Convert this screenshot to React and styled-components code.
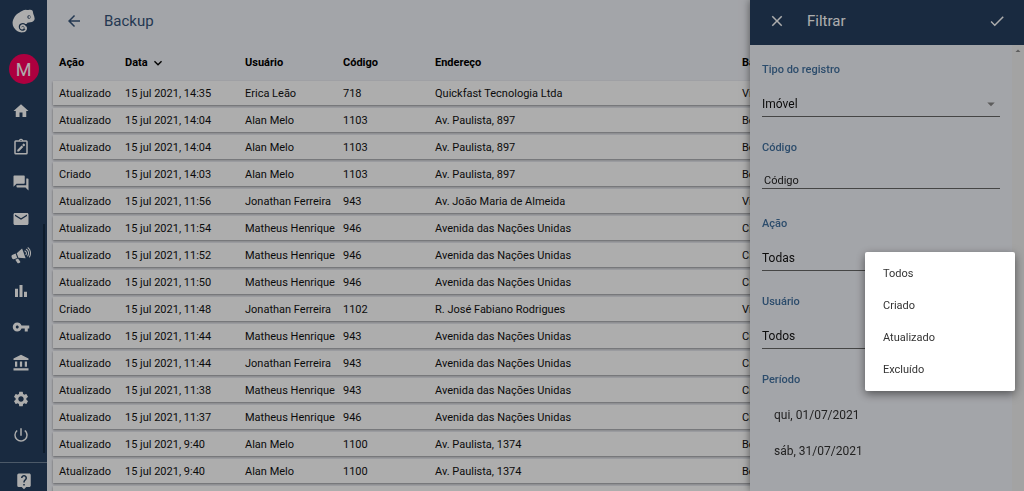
import React, { useState } from 'react';
import styled, { createGlobalStyle } from 'styled-components';
import {
  MdHome, MdForum, MdMail, MdBarChart, MdVpnKey, MdAccountBalance, MdSettings,
  MdPowerSettingsNew, MdLiveHelp, MdArrowBack, MdClose, MdCheck, MdExpandMore, MdArrowDropDown, MdArrowDropUp,
} from 'react-icons/md';

const NAVY = '#253f5f';
const PINK = '#ff005e';
const PAGE = '#f1f3f9';
const LABEL = '#42719f';

const ROWS = [
  ['Atualizado', '15 jul 2021, 14:35', 'Erica Leão', '718', 'Quickfast Tecnologia Ltda', 'Vila Mariana'],
  ['Atualizado', '15 jul 2021, 14:04', 'Alan Melo', '1103', 'Av. Paulista, 897', 'Bela Vista'],
  ['Atualizado', '15 jul 2021, 14:04', 'Alan Melo', '1103', 'Av. Paulista, 897', 'Bela Vista'],
  ['Criado', '15 jul 2021, 14:03', 'Alan Melo', '1103', 'Av. Paulista, 897', 'Bela Vista'],
  ['Atualizado', '15 jul 2021, 11:56', 'Jonathan Ferreira', '943', 'Av. João Maria de Almeida', 'Vila Mariana'],
  ['Atualizado', '15 jul 2021, 11:54', 'Matheus Henrique', '946', 'Avenida das Nações Unidas', 'Cidade Monções'],
  ['Atualizado', '15 jul 2021, 11:52', 'Matheus Henrique', '946', 'Avenida das Nações Unidas', 'Cidade Monções'],
  ['Atualizado', '15 jul 2021, 11:50', 'Matheus Henrique', '946', 'Avenida das Nações Unidas', 'Cidade Monções'],
  ['Criado', '15 jul 2021, 11:48', 'Jonathan Ferreira', '1102', 'R. José Fabiano Rodrigues', 'Vila Mariana'],
  ['Atualizado', '15 jul 2021, 11:44', 'Matheus Henrique', '943', 'Avenida das Nações Unidas', 'Cidade Monções'],
  ['Atualizado', '15 jul 2021, 11:44', 'Jonathan Ferreira', '943', 'Avenida das Nações Unidas', 'Cidade Monções'],
  ['Atualizado', '15 jul 2021, 11:38', 'Matheus Henrique', '943', 'Avenida das Nações Unidas', 'Cidade Monções'],
  ['Atualizado', '15 jul 2021, 11:37', 'Matheus Henrique', '946', 'Avenida das Nações Unidas', 'Cidade Monções'],
  ['Atualizado', '15 jul 2021, 9:40', 'Alan Melo', '1100', 'Av. Paulista, 1374', 'Bela Vista'],
  ['Atualizado', '15 jul 2021, 9:40', 'Alan Melo', '1100', 'Av. Paulista, 1374', 'Bela Vista'],
  ['', '', '', '', '', ''],
];

const GlobalStyle = createGlobalStyle`
  * {
    box-sizing: border-box;
  }
  body {
    margin: 0;
    overflow: hidden;
    background: ${PAGE};
    font-family: Roboto, "Liberation Sans", sans-serif;
  }
  button, input, select {
    font-family: inherit;
  }
`;

const Page = styled.div`
  display: flex;
  height: 100vh;
  overflow: hidden;
`;

const Sidebar = styled.aside`
  display: flex;
  flex-direction: column;
  align-items: center;
  flex: 0 0 47px;
  background: ${NAVY};
  color: #fff;
`;

const LogoLink = styled.a`
  display: flex;
  padding: 9px 0 21px;
  color: #fff;
`;

const Avatar = styled.button`
  flex: 0 0 30px;
  width: 30px;
  padding: 0;
  border: 0;
  border-radius: 50%;
  background: ${PINK};
  color: #fff;
  font-size: 18px;
`;

const NavArea = styled.div`
  display: flex;
  align-self: stretch;
  flex: 1;
  min-height: 0;
  padding-top: 9px;
`;

const Nav = styled.nav`
  display: flex;
  flex-direction: column;
  flex: 1;
`;

const ScrollThumb = styled.div`
  align-self: flex-end;
  width: 2px;
  height: 62%;
  margin: 0 2px 9px;
  background: #152a42;
`;

const NavLink = styled.a`
  display: flex;
  align-items: center;
  justify-content: center;
  flex: 0 0 36px;
  color: #fff;
  font-size: 18px;
`;

const HelpLink = styled(NavLink)`
  align-self: stretch;
  flex-basis: 29px;
  padding-top: 8px;
  border-top: 1px solid #71839a;
`;

const Main = styled.main`
  flex: 1;
  min-width: 0;
  padding: 0 6px;
`;

const TitleBar = styled.header`
  display: flex;
  align-items: center;
  gap: 21px;
  height: 42px;
  padding-left: 12px;
  color: #35547a;
`;

const Title = styled.h1`
  margin: 0;
  font-size: 15px;
  font-weight: 400;
`;

const IconButton = styled.button`
  display: flex;
  padding: 0;
  border: 0;
  background: none;
  color: inherit;
  font-size: 18px;
`;

const Table = styled.table`
  width: 100%;
  table-layout: fixed;
  border-spacing: 0 3px;
  font-size: 11px;
  color: #111;
`;

const Col = styled.col`
  width: ${({ $width }) => $width || 'auto'};
`;

const HeadCell = styled.th`
  height: 33px;
  padding: 2px 0 0 6px;
  text-align: left;
  font-weight: 700;
  color: #000;
`;

const SortButton = styled.button`
  display: flex;
  align-items: center;
  gap: 2px;
  padding: 0;
  border: 0;
  background: none;
  color: inherit;
  font-size: inherit;
  font-weight: inherit;

  svg {
    font-size: 16px;
  }
`;

const Row = styled.tr`
  height: 24px;
  background: #fff;
  box-shadow: 0 1px 2px rgba(0, 0, 0, 0.4);
`;

const Cell = styled.td`
  padding: 0 0 0 6px;
  white-space: nowrap;
`;

const Drawer = styled.form`
  position: fixed;
  top: 0;
  right: 0;
  bottom: 0;
  display: flex;
  flex-direction: column;
  width: 274px;
  background: ${PAGE};
  box-shadow: 0 0 8px rgba(0, 0, 0, 0.5);
`;

const DrawerHeader = styled.header`
  display: flex;
  align-items: center;
  gap: 21px;
  flex: 0 0 45px;
  padding: 0 18px 3px;
  background: ${NAVY};
  color: #fff;

  ${IconButton}:last-child {
    margin-left: auto;
  }
`;

const DrawerBody = styled.div`
  display: flex;
  flex: 1;
  min-height: 0;
`;

const Fields = styled.div`
  display: flex;
  flex-direction: column;
  flex: 1;
  padding: 17px 12px 0;
`;

const ScrollTrack = styled.div`
  width: 12px;
  background: #f1f1f1;
  color: #8a8a8a;
  font-size: 12px;
`;

const Field = styled.div`
  display: flex;
  flex-direction: column;
  gap: 13px;
  height: ${({ $height }) => $height || '78px'};
`;

const Label = styled.label`
  color: ${LABEL};
  font-size: 11px;
  line-height: 16px;
  font-weight: 500;
`;

const SelectBox = styled.div`
  display: flex;
  align-items: center;
  border-bottom: 1px solid #666;
  color: #888;

  select {
    flex: 1;
    height: 25px;
    padding: 0;
    border: 0;
    appearance: none;
    background: none;
    color: #111;
    font-size: 12px;
  }
`;

const Input = styled.input`
  height: 20px;
  padding: 4px 2px 0;
  border: 0;
  border-bottom: 1px solid #666;
  background: none;
  color: #222;
  font-size: 11px;

  &::placeholder {
    color: #222;
    opacity: 1;
  }
`;

const Dates = styled.div`
  display: flex;
  flex-direction: column;
  padding-top: 9px;
`;

const DateButton = styled.button`
  padding: 0 0 0 12px;
  border: 0;
  background: none;
  color: #333;
  font-size: 12px;
  line-height: 36px;
  text-align: left;
`;

const Backdrop = styled.div`
  position: fixed;
  inset: 0;
  background: rgba(0, 0, 0, 0.32);
`;

const Menu = styled.div`
  position: fixed;
  top: 252px;
  right: 9px;
  display: flex;
  flex-direction: column;
  width: 150px;
  padding: 6px 0 5px;
  border-radius: 2px;
  background: #fff;
  box-shadow: 0 3px 10px rgba(0, 0, 0, 0.5);
`;

const MenuItem = styled.button`
  padding: 0 18px;
  border: 0;
  background: none;
  color: #333;
  font-size: 11px;
  line-height: 32px;
  text-align: left;
`;

// chameleon with a curled tail
function Logo() {
  return (
    <svg width="23" height="24" viewBox="36 28 69 72" aria-hidden="true">
      <path
        fill="currentColor"
        d="M59 38c3-3 8-3 11-6 6-4 11-1 15-1 5-2 10-1 13 2l2 10 3 8 1 7c-1 6-6 9-13 10l-9 1c-1 4-4 5-6 4-3-4-10-4-15-1-5 3-6 10-3 16 3 4 8 6 12 5 7-1 9-7 6-11l3-2c5 8 0 17-9 18-13 2-23-5-29-15-5-9-4-20 1-28 4-8 10-14 18-17z"
      />
      <path
        fill="none"
        stroke="currentColor"
        strokeWidth="5"
        strokeLinecap="round"
        d="M76 87c1-8-5-12-10-10s-5 9 0 10c3 0 4-3 2-4"
      />
      <circle cx="87" cy="52" r="5" fill={NAVY} />
      <circle cx="88" cy="52" r="3" fill="currentColor" />
    </svg>
  );
}

function ClipboardEdit() {
  return (
    <svg width="18" height="18" viewBox="0 0 24 24" fill="currentColor" aria-hidden="true">
      <path
        fillRule="evenodd"
        d="M5 3h4.200a3 3 0 0 1 5.600 0H19a2 2 0 0 1 2 2v15a2 2 0 0 1-2 2H5a2 2 0 0 1-2-2V5a2 2 0 0 1 2-2zm0 2v15h14V5zm7-2.500a.8.8 0 1 0 0 1.600.8.8 0 0 0 0-1.600z"
      />
      <path d="M7 16v2h2.200l5.800-6-2.200-2.100zM13.500 9.200l2.200 2.200 1.500-1.500c.4-.4.4-.8 0-1.200l-1-1c-.4-.4-.8-.4-1.200 0z" />
    </svg>
  );
}

function Megaphone() {
  return (
    <svg width="20" height="18" viewBox="0 0 28 24" aria-hidden="true">
      <g fill="currentColor">
        <path d="M1.500 12 6.500 10l2.300 6.200-4.800 1.600c-1.200.3-2-.2-2.500-1.300l-.7-1.800c-.3-1 0-2.300.7-2.700z" />
        <path d="M8 9.400 15.500 3l5 13.500-10.200-.8z" />
        <path d="m6 18.500 3.800-1.500 3 4.200c.5.800.2 1.500-.6 1.800l-1.600.5c-.8.300-1.400 0-1.800-.7z" />
      </g>
      <g fill="none" stroke="currentColor" strokeWidth="1.500" strokeLinecap="round">
        <path d="M19.500 6.500c2 .8 2.700 3.300 1.500 5M21.500 4c3.200 1.800 4 6 1.900 9.300M23.800 1.800c3.800 2.700 4.600 8.600 2 13" />
      </g>
    </svg>
  );
}

const NAV = [
  ['Início', MdHome], ['Tarefas', ClipboardEdit], ['Conversas', MdForum], ['E-mail', MdMail], ['Anúncios', Megaphone],
  ['Relatórios', MdBarChart], ['Chaves', MdVpnKey], ['Financeiro', MdAccountBalance],
  ['Configurações', MdSettings], ['Sair', MdPowerSettingsNew],
];

function SelectField({ id, label, value }) {
  return (
    <Field>
      <Label htmlFor={id}>{label}</Label>
      <SelectBox>
        <select id={id}>
          <option>{value}</option>
        </select>
        <MdArrowDropDown size={18} />
      </SelectBox>
    </Field>
  );
}

function App() {
  const [open, setOpen] = useState(true);
  return (
    <Page>
      <GlobalStyle />
      <Sidebar>
        <LogoLink href="#" aria-label="Página inicial"><Logo /></LogoLink>
        <Avatar>M</Avatar>
        <NavArea>
          <Nav>
            {NAV.map(([name, Icon]) => (
              <NavLink key={name} href="#" aria-label={name}><Icon /></NavLink>
            ))}
          </Nav>
          <ScrollThumb />
        </NavArea>
        <HelpLink href="#" aria-label="Ajuda"><MdLiveHelp /></HelpLink>
      </Sidebar>
      <Main>
        <TitleBar>
          <IconButton aria-label="Voltar"><MdArrowBack /></IconButton>
          <Title>Backup</Title>
        </TitleBar>
        <Table>
          <colgroup>
            <Col $width="66px" />
            <Col $width="120px" />
            <Col $width="98px" />
            <Col $width="92px" />
            <Col $width="307px" />
            <Col />
          </colgroup>
          <thead>
            <tr>
              <HeadCell>Ação</HeadCell>
              <HeadCell><SortButton>Data <MdExpandMore /></SortButton></HeadCell>
              <HeadCell>Usuário</HeadCell>
              <HeadCell>Código</HeadCell>
              <HeadCell>Endereço</HeadCell>
              <HeadCell>Bairro</HeadCell>
            </tr>
          </thead>
          <tbody>
            {ROWS.map((row, i) => (
              <Row key={i}>
                {row.map((text, j) => <Cell key={j}>{text}</Cell>)}
              </Row>
            ))}
          </tbody>
        </Table>
      </Main>
      <Drawer onSubmit={(e) => e.preventDefault()}>
        <DrawerHeader>
          <IconButton type="button" aria-label="Fechar"><MdClose /></IconButton>
          <Title as="h2">Filtrar</Title>
          <IconButton type="submit" aria-label="Aplicar"><MdCheck /></IconButton>
        </DrawerHeader>
        <DrawerBody>
          <Fields>
            <SelectField id="tipo" label="Tipo do registro" value="Imóvel" />
            <Field $height="76px">
              <Label htmlFor="codigo">Código</Label>
              <Input id="codigo" placeholder="Código" />
            </Field>
            <SelectField id="acao" label="Ação" value="Todas" />
            <SelectField id="usuario" label="Usuário" value="Todos" />
            <Label as="span">Período</Label>
            <Dates>
              <DateButton type="button">qui, 01/07/2021</DateButton>
              <DateButton type="button">sáb, 31/07/2021</DateButton>
            </Dates>
          </Fields>
          <ScrollTrack><MdArrowDropUp /></ScrollTrack>
        </DrawerBody>
      </Drawer>
      {open && (
        <>
          <Backdrop onClick={() => setOpen(false)} />
          <Menu role="menu">
            {['Todos', 'Criado', 'Atualizado', 'Excluído'].map((item) => (
              <MenuItem key={item} role="menuitem" onClick={() => setOpen(false)}>{item}</MenuItem>
            ))}
          </Menu>
        </>
      )}
    </Page>
  );
}

export default App;
